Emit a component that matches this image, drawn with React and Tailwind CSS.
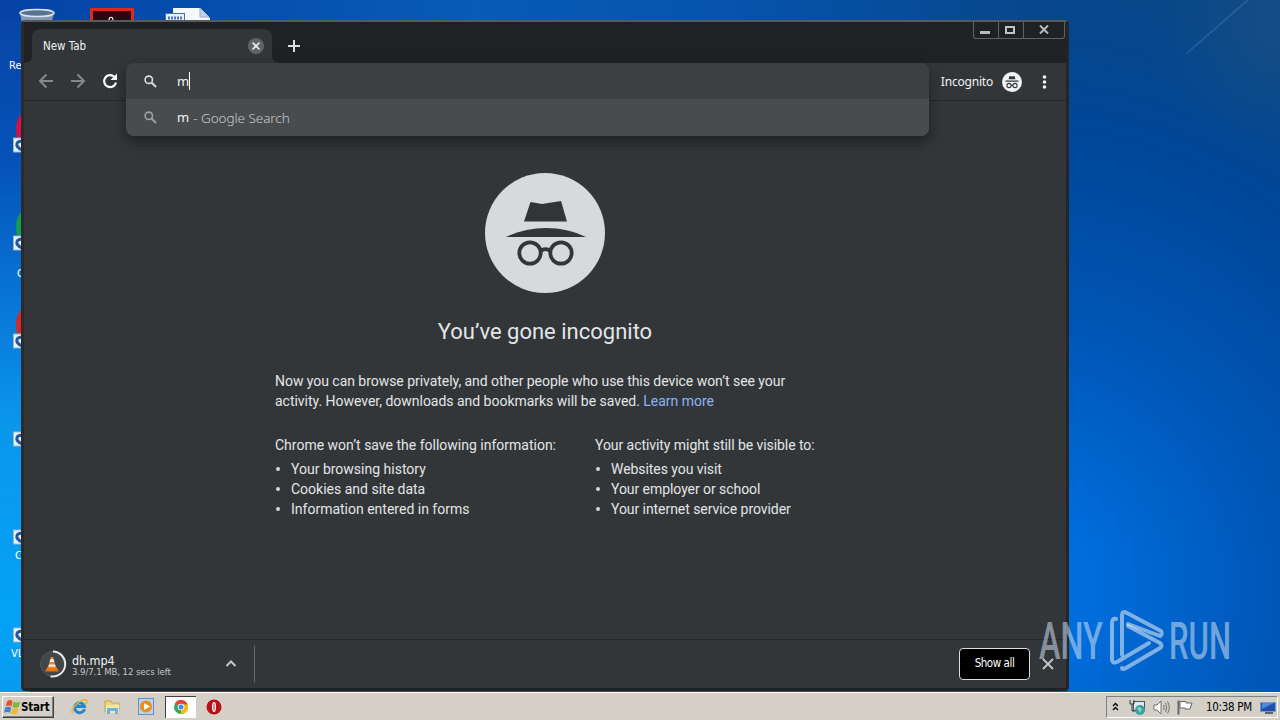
import { X } from 'lucide-react';

const ui = "font-['DejaVu_Sans_Condensed','Noto_Sans',sans-serif]";
const noto = "font-['Noto_Sans',sans-serif]";

const SAVED = ['Your browsing history', 'Cookies and site data', 'Information entered in forms'];
const VISIBLE = ['Websites you visit', 'Your employer or school', 'Your internet service provider'];

function Wallpaper() {
  return (
    <svg className="absolute inset-0" width="1280" height="720" viewBox="0 0 1280 720">
      <defs>
        <linearGradient id="left" x1="0" y1="0" x2="0" y2="1">
          <stop offset="0" stopColor="#0846a8" />
          <stop offset="0.2" stopColor="#0552b8" />
          <stop offset="0.4" stopColor="#0876d6" />
          <stop offset="0.58" stopColor="#0a97ec" />
          <stop offset="0.85" stopColor="#04a2f6" />
          <stop offset="1" stopColor="#0898ee" />
        </linearGradient>
        <linearGradient id="top" x1="0" y1="0" x2="1" y2="0">
          <stop offset="0" stopColor="#0543a6" />
          <stop offset="0.45" stopColor="#075cb6" />
          <stop offset="0.7" stopColor="#0653ab" />
          <stop offset="1" stopColor="#074689" />
        </linearGradient>
        <radialGradient id="right" gradientUnits="userSpaceOnUse" cx="1010" cy="590" r="600">
          <stop offset="0" stopColor="#0072e2" />
          <stop offset="0.15" stopColor="#006cda" />
          <stop offset="0.45" stopColor="#0056b6" />
          <stop offset="0.75" stopColor="#00479a" />
          <stop offset="1" stopColor="#074689" />
        </radialGradient>
        <radialGradient id="corner" gradientUnits="userSpaceOnUse" cx="1290" cy="20" r="140">
          <stop offset="0" stopColor="#1a5084" stopOpacity="0.8" />
          <stop offset="1" stopColor="#1a5084" stopOpacity="0" />
        </radialGradient>
      </defs>
      <rect width="1062" height="30" fill="url(#top)" />
      <rect y="22" width="30" height="698" fill="url(#left)" />
      <rect x="1060" width="220" height="720" fill="url(#right)" />
      <rect x="1060" width="220" height="720" fill="url(#corner)" />
      <path d="M1248 0 L1186 54" stroke="#5b8fc4" strokeOpacity="0.35" strokeWidth="1.5" />
    </svg>
  );
}

function Shortcut({ y, color }) {
  return (
    <g>
      {color && <ellipse cx="29" cy={y - 16} rx="13" ry="19" fill={color} />}
      <rect x="13.5" y={y - 7} width="14" height="14" fill="#e8f1f8" stroke="#9ab6cf" />
      <path d={`M22 ${y + 5} C14 ${y + 1} 16 ${y - 4} 23 ${y - 4}`} fill="none" stroke="#24569b" strokeWidth="3" />
    </g>
  );
}

function DesktopIcons() {
  return (
    <svg className="absolute inset-0" width="300" height="692" viewBox="0 0 300 692">
      <path d="M20 12 L23 30 H50 L54 12Z" fill="#8199b5" />
      <ellipse cx="37" cy="13" rx="17" ry="3.5" fill="#5a738f" stroke="#dce5ec" strokeWidth="1.5" />
      <rect x="91.5" y="9.5" width="41" height="20" fill="#2b0710" stroke="#e0281c" strokeWidth="3" />
      <path d="M109 21 C109 16 113 16 113 21" fill="none" stroke="#fff" strokeWidth="1.2" />
      <path d="M173 8 H200 L210 18 V30 H173Z" fill="#f4f7fb" />
      <path d="M200 8 V17 H209" fill="#c5d5e7" stroke="#94abc7" />
      <rect x="165.5" y="13.5" width="19" height="12" fill="#e9f0fa" stroke="#3e6dbb" />
      <path d="M168 18 H182" stroke="#4c7cc7" strokeWidth="3" strokeDasharray="2 1" />
      <Shortcut y={145} color="#d5114c" />
      <Shortcut y={243} color="#169b52" />
      <Shortcut y={341} color="#d32a28" />
      <Shortcut y={439} />
      <Shortcut y={537} />
      <Shortcut y={635} />
      <g className={ui} fontSize="11" fill="#fff">
        <text x="9" y="69">Re</text>
        <text x="17" y="277">G</text>
        <text x="15" y="559">C</text>
        <text x="11" y="657">VL</text>
      </g>
    </svg>
  );
}

function IncognitoMark({ size, disc, ink }) {
  return (
    <svg width={size} height={size} viewBox="0 0 120 120" className="shrink-0">
      <circle cx="60" cy="60" r="60" fill={disc} />
      <g fill={ink}>
        <path d="M45.5 29 L57 31 L76 28 L82 48.5 H39Z" />
        <path d="M21 64 C46 52 76 52 101 64Z" />
      </g>
      <g fill="none" stroke={ink} strokeWidth="3.8">
        <circle cx="45" cy="80" r="10.7" />
        <circle cx="76" cy="80" r="10.7" />
        <path d="M55.5 78 C58.5 75.5 62.5 75.5 65.5 78" />
      </g>
    </svg>
  );
}

// The toolbar badge needs heavier shapes than the large mark to stay legible at 20px.
function IncognitoBadge() {
  return (
    <svg width="20" height="20" viewBox="0 0 20 20" className="shrink-0">
      <circle cx="10" cy="10" r="10" fill="#f1f3f4" />
      <path d="M7.4 4 Q10 4.9 12.6 4 L13.4 7.2 H6.6Z M3.5 8.5 H16.5 V9.8 H3.5Z" fill="#323639" />
      <g fill="none" stroke="#323639" strokeWidth="1.1">
        <circle cx="7" cy="13.5" r="2.1" />
        <circle cx="13" cy="13.5" r="2.1" />
        <path d="M9 13.2 H11" />
      </g>
    </svg>
  );
}

function WindowButtons() {
  return (
    <div className="mr-px flex h-[17px] w-[92px] rounded-b-[3px] border-x border-b border-[#606264]">
      <div className="flex w-[25px] items-center justify-center border-r border-[#606264] pr-0.5">
        <div className="mt-1 h-[3px] w-[10px] bg-[#b9bbbc]" />
      </div>
      <div className="flex w-[25px] items-center justify-center border-r border-[#606264] pr-0.5">
        <div className="-mt-px h-2 w-[10px] border-2 border-[#c2c4c5]" />
      </div>
      <div className="flex flex-1 items-center justify-center">
        <svg className="-mt-0.5" width="10" height="9" viewBox="0 0 10 9"><path d="M1 0.5 L9 8.5 M9 0.5 L1 8.5" stroke="#b9bbbc" strokeWidth="2" /></svg>
      </div>
    </div>
  );
}

function TabStrip() {
  return (
    <div className="flex h-[41px] items-start justify-between bg-[#202124]">
      <div className="flex">
        <svg className="mt-[33px]" width="8" height="8"><path d="M0 8 Q8 8 8 0 V8Z" fill="#323639" /></svg>
        <div className="mt-[7px] flex h-[34px] w-[240px] items-center justify-between rounded-t-lg bg-[#323639] pr-2 pl-[11px]">
          <span className={`${ui} pt-0.5 text-[11.5px] text-[#f1f3f4]`}>New Tab</span>
          <span className="flex size-4 items-center justify-center rounded-full bg-[#5f6368]">
            <X size={12} strokeWidth={3.2} color="#f1f3f4" />
          </span>
        </div>
        <svg className="mt-[33px]" width="8" height="8"><path d="M8 8 Q0 8 0 0 V8Z" fill="#323639" /></svg>
        <svg className="mt-[18px] ml-2" width="12" height="12"><path d="M6 0 V12 M0 6 H12" stroke="#dadce0" strokeWidth="2" /></svg>
      </div>
      <WindowButtons />
    </div>
  );
}

function SearchGlyph({ color }) {
  return (
    <svg width="13" height="13" viewBox="0 0 13 13" fill="none" stroke={color}>
      <circle cx="4.8" cy="4.8" r="3.7" strokeWidth="1.6" />
      <path d="M7.5 7.5 L12 12" strokeWidth="2" />
    </svg>
  );
}

function Omnibox() {
  return (
    <div className={`${noto} absolute top-0 left-[102px] w-[803px] overflow-hidden rounded-lg bg-[#3c4043] text-[13px] text-[#f1f3f4] shadow-[0_6px_14px_rgba(0,0,0,0.4)]`}>
      <div className="flex h-[36px] items-center pl-[18px]">
        <SearchGlyph color="#dadce0" />
        <span className="ml-5 pt-px">m</span>
        <span className="h-[18px] w-px bg-white" />
      </div>
      <div className="flex h-[37px] items-center bg-[#494c4f] pl-[18px]">
        <SearchGlyph color="#9aa0a6" />
        <span className="ml-5 pt-px">m</span>
        <span className="ml-1 pt-px text-[13.5px] font-light tracking-[-0.05px] text-[#c8cacc]">- Google Search</span>
      </div>
    </div>
  );
}

function Toolbar() {
  return (
    <div className="relative flex h-[38px] items-center border-b border-[#25282a] pl-[14px]">
      <svg className="-mt-px" width="80" height="16" viewBox="0 0 80 16" fill="none" strokeWidth="2">
        <path d="M15 8 H2 M8.5 1.5 L2 8 L8.5 14.5" stroke="#85888a" />
        <path d="M33 8 H46 M39.5 1.5 L46 8 L39.5 14.5" stroke="#85888a" />
        <path d="M76.5 4 A6 6 0 1 0 78 9.5" stroke="#fff" strokeWidth="2.2" />
        <path d="M79 0.5 V7 H72.5Z" fill="#fff" />
      </svg>
      <Omnibox />
      <div className="ml-auto flex items-center pr-[19px]">
        <span className={`${noto} mr-[9px] text-[12px] tracking-[-0.2px] text-[#f1f3f4]`}>Incognito</span>
        <IncognitoBadge />
        <svg className="ml-5" width="5" height="14" fill="#f1f3f4">
          <circle cx="2.5" cy="2" r="1.8" /><circle cx="2.5" cy="7" r="1.8" /><circle cx="2.5" cy="12" r="1.8" />
        </svg>
      </div>
    </div>
  );
}

function InfoList({ title, items }) {
  return (
    <div className="w-[320px] shrink-0">
      <p className="whitespace-nowrap">{title}</p>
      <ul className="mt-1">
        {items.map((item) => (
          <li key={item} className="flex items-center">
            <span className="mr-[11px] ml-px size-1 rounded-full bg-[#d5d7d9]" />
            {item}
          </li>
        ))}
      </ul>
    </div>
  );
}

function IncognitoPage() {
  return (
    <main className="flex flex-1 flex-col items-center pt-[72px] font-[Roboto,sans-serif] text-[14px] leading-5 text-[#e3e5e7]">
      <IncognitoMark size={120} disc="#d8d9da" ink="#323639" />
      <h1 className="mt-[27px] text-[22px] leading-6">You’ve gone incognito</h1>
      <div className="mt-[27px] w-[540px]">
        <p className="tracking-[-0.04px]">
          Now you can browse privately, and other people who use this device won’t see your<br />
          <span className="tracking-[-0.02px]">
            activity. However, downloads and bookmarks will be saved. <a className="text-[#8ab4f8]">Learn more</a>
          </span>
        </p>
        <div className="mt-6 flex">
          <InfoList title="Chrome won’t save the following information:" items={SAVED} />
          <div className="tracking-[-0.06px]">
            <InfoList title="Your activity might still be visible to:" items={VISIBLE} />
          </div>
        </div>
      </div>
    </main>
  );
}

function VlcProgress() {
  return (
    <svg width="28" height="28" viewBox="0 0 28 28">
      <circle cx="13" cy="14" r="12.5" fill="#43474a" stroke="#54585b" strokeWidth="1" />
      <path d="M13 1.5 A12.5 12.5 0 1 1 10.5 26.3" fill="none" stroke="#e8eaed" strokeWidth="2" />
      <path d="M7.5 17 H16.5 L19 21.5 H5Z" fill="#e87511" />
      <path d="M11 7 H13 L16 17.5 Q12 19.5 8 17.5Z" fill="#f58220" />
      <path d="M10.5 9 H13.5 L14.4 12 H9.6Z M8.9 14.5 H15.1 L15.7 16.7 H8.3Z" fill="#eee" />
    </svg>
  );
}

function DownloadShelf() {
  return (
    <div className="flex h-[49px] items-center border-t border-[#25282a] pb-px pl-4">
      <VlcProgress />
      <div className="ml-1 w-[151px] pt-1">
        <div className={`${ui} text-[12.5px] leading-[12px] tracking-[-0.1px] text-[#f1f3f4]`}>dh.mp4</div>
        <div className={`${ui} text-[9.5px] leading-[10px] tracking-[-0.07px] text-[#c4c7ca]`}>3.9/7.1 MB, 12 secs left</div>
      </div>
      <svg className="ml-0.5" width="12" height="7"><path d="M1.5 6 L6 1.5 L10.5 6" fill="none" stroke="#c4c7ca" strokeWidth="2" /></svg>
      <div className="ml-[17px] h-9 w-px bg-[#65696c]" />
      <div className="ml-auto flex items-center">
        <button className={`${ui} h-8 w-[71px] rounded-[4px] border border-[#dadce0] bg-black text-[11.5px] tracking-[-0.45px] text-white`}>Show all</button>
        <svg className="mr-[12px] ml-3" width="12" height="12"><path d="M1 1 L11 11 M11 1 L1 11" stroke="#c4c7ca" strokeWidth="1.8" /></svg>
      </div>
    </div>
  );
}

function Watermark() {
  return (
    <svg className="absolute top-[600px] left-[1030px]" width="230" height="82" viewBox="0 0 230 82">
      <g fill="#d5e3f2" fillOpacity="0.55" fontFamily="Roboto" fontSize="51" fontWeight="500">
        <text transform="translate(9 59) scale(0.635 1)">ANY</text>
        <text transform="translate(139 59) scale(0.61 1)">RUN</text>
      </g>
      <g fill="none" stroke="#d5e3f2" strokeOpacity="0.6" strokeWidth="4" strokeLinejoin="round" strokeLinecap="round">
        <path d="M92 55 V16 Q92 10 97 13 L131 31 Q133 34 130 36 L98 24" />
        <path d="M86 19 Q82 18 82 23 V59 Q82 64 87 62 L119 43" />
        <path d="M92 68 Q92 70 96 68 L130 48 Q133 46 130 43 L98 26" />
      </g>
    </svg>
  );
}

function WindowsFlag() {
  return (
    <svg width="17" height="16" viewBox="0 0 16 15" className="shrink-0">
      <path d="M3 2 Q6 0 8 2 L7 7 Q4 5 1.5 7Z" fill="#e5532c" />
      <path d="M9 2.5 Q12 4 15 2.5 L14 7.5 Q11 9 8 7.5Z" fill="#7cb73e" />
      <path d="M1.2 8 Q4 6.5 6.7 8 L5.7 13 Q3 11.5 0 13Z" fill="#3f85d0" />
      <path d="M7.7 8.5 Q10.5 10 13.7 8.5 L12.5 13.5 Q9.5 15 6.7 13.5Z" fill="#f4bc27" />
    </svg>
  );
}

function QuickLaunch() {
  return (
    <>
      <svg className="ml-[17px]" width="17" height="17" viewBox="0 0 17 17" fill="none">
        <path d="M13.5 11 A5 5 0 1 1 13.5 8.5 H5" stroke="#2386d2" strokeWidth="3" />
        <path d="M1.5 15.5 C-1 11 10 0 15.5 2 C17 3 15 6 14 7" stroke="#e5b52d" strokeWidth="1.4" />
      </svg>
      <svg className="ml-4" width="17" height="17" viewBox="0 0 17 17">
        <path d="M1 3 H7 L8 5 H15 V14 H1Z" fill="#eed67a" stroke="#c6a74a" />
        <path d="M2 7 H15 V15 H2Z" fill="#f9e9a5" />
        <path d="M3 16 V10 H14 V16 H11 V13 H6 V16Z" fill="#69b4e2" />
      </svg>
      <svg className="ml-[17px]" width="17" height="17" viewBox="0 0 17 17">
        <rect x="0.5" y="0.5" width="15" height="16" fill="#b7d5ef" stroke="#5b93c8" />
        <circle cx="8" cy="8.5" r="6" fill="#f28a18" />
        <path d="M6 5 L12 8.5 L6 12Z" fill="#fff" />
      </svg>
      <div className="ml-[10px] flex h-[22px] w-[31px] items-center justify-center border-t border-l border-[#404040] bg-white">
        <svg width="14" height="14" viewBox="0 0 14 14">
          <circle cx="7" cy="7" r="7" fill="#34a853" />
          <path d="M7 7 L1 3.5 A7 7 0 0 1 13.5 4.5 H7Z" fill="#ea4335" />
          <path d="M7 7 L9.5 4.5 H13.5 A7 7 0 0 1 7 14Z" fill="#fbbc05" />
          <circle cx="7" cy="7" r="3.3" fill="#fff" />
          <circle cx="7" cy="7" r="2.5" fill="#4285f4" />
        </svg>
      </div>
      <svg className="ml-[10px]" width="16" height="16" viewBox="0 0 16 16">
        <circle cx="8" cy="8" r="7.5" fill="#b91117" />
        <ellipse cx="8" cy="8" rx="2" ry="5" fill="#fff" />
        <ellipse cx="8" cy="8" rx="0.6" ry="4" fill="#c73a3e" />
      </svg>
    </>
  );
}

function Tray() {
  return (
    <div className="ml-auto flex h-[22px] w-[172px] items-center border border-t-[#808080] border-r-white border-b-white border-l-[#808080] pl-[5px]">
      <svg width="7" height="9" fill="none" stroke="#000" strokeWidth="1.3"><path d="M1 4 L3.5 1.5 L6 4 M1 8 L3.5 5.5 L6 8" /></svg>
      <svg className="mt-px ml-[10px]" width="17" height="17" viewBox="0 0 17 17">
        <rect x="4.5" y="2.5" width="11" height="9" fill="#dfe8e8" stroke="#48565c" />
        <path d="M1 1 V5 H5 V1 M3 5 V12 H7" stroke="#343c40" fill="none" />
        <circle cx="11" cy="11" r="5" fill="#35a2a0" />
        <path d="M8 9 Q11 7 13 10 L11 14" fill="#8dd0b4" />
      </svg>
      <svg className="mt-px ml-[7px]" width="17" height="15" viewBox="0 0 17 15" fill="none" stroke="#707070">
        <path d="M1 5 H4 L8 1 V14 L4 10 H1Z" fill="#fff" />
        <path d="M10.5 5 Q12 7.5 10.5 10 M12.5 3 Q15 7.5 12.5 12 M14.5 1.5 Q18 7.5 14.5 13.5" />
      </svg>
      <svg className="mt-px ml-[7px]" width="17" height="15" viewBox="0 0 17 15" stroke="#666">
        <path d="M1.5 0.5 V14.5" strokeWidth="2" />
        <path d="M3 1.5 H9 V3 H15 L13 9 H8 V8 H3Z" fill="#fff" />
      </svg>
      <span className={`${ui} ml-[12px] pt-0.5 text-[11.5px] tracking-[-0.3px] whitespace-nowrap`}>10:38 PM</span>
      <svg className="mt-0.5 mr-px ml-auto" width="16" height="14" viewBox="0 0 16 14">
        <rect x="0.5" y="1.5" width="15" height="9" fill="#1c51af" stroke="#7899c8" />
        <path d="M2 2 H14 L2 8Z" fill="#4c88dc" />
        <path d="M5 12 H13" stroke="#5d6470" strokeWidth="2" />
      </svg>
    </div>
  );
}

function Taskbar() {
  return (
    <div className="flex h-7 items-center border-t border-white bg-[#d4d0c8] px-0.5 text-black">
      <div className={`${ui} flex h-[22px] w-[52px] items-center border border-t-white border-r-[#404040] border-b-[#404040] border-l-white pl-px text-[11.5px] font-bold tracking-[-0.2px] shadow-[inset_-1px_-1px_#808080]`}>
        <WindowsFlag />
        <span className="pt-0.5">Start</span>
      </div>
      <QuickLaunch />
      <Tray />
    </div>
  );
}

export default function App() {
  return (
    <div className="relative flex h-[720px] w-[1280px] flex-col overflow-hidden bg-[#04509f]">
      <Wallpaper />
      <DesktopIcons />
      <div className="flex flex-1 pt-5 pl-[21px]">
        <div className="relative flex h-[671px] w-[1048px] flex-col rounded-[4px] border-t-2 border-r-[3px] border-b-[3px] border-l-3 border-t-[#57595b] border-r-[#232527] border-b-[#202224] border-l-[#292b2d] bg-[#323639]">
          <TabStrip />
          <Toolbar />
          <IncognitoPage />
          <DownloadShelf />
        </div>
      </div>
      <Watermark />
      <div className="relative">
        <Taskbar />
      </div>
    </div>
  );
}
